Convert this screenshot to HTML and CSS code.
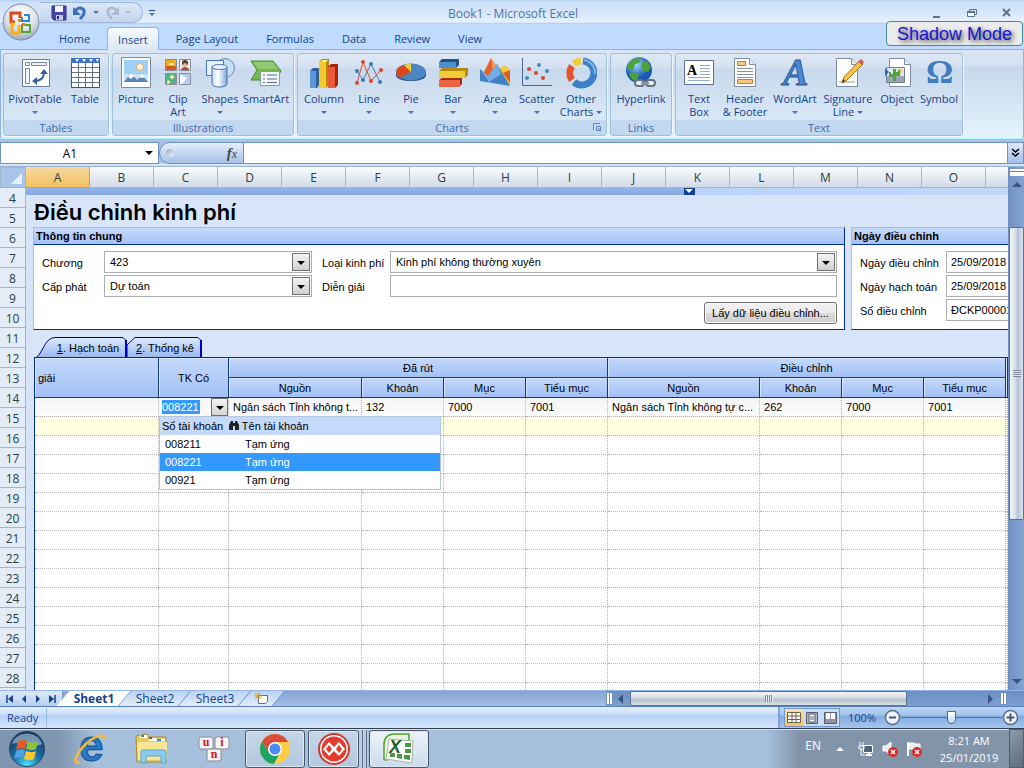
FILE: index.html
```html
<!DOCTYPE html>
<html lang="vi">
<head>
  <meta charset="UTF-8">
  <meta name="viewport" content="width=device-width, initial-scale=1.0">
  <title>Book1 - Microsoft Excel</title>
  <link rel="stylesheet" href="styles.css">
</head>
<body>

  <header class="titlebar">
    <div class="qat">
      <button aria-label="Save"><svg width="16" height="16" viewBox="0 0 16 16"><path d="M1 1h14v14H3l-2-2z" fill="#4646a8" stroke="#2c2c84"/><path d="M4 1h8v6H4z" fill="#f4f6ff"/><path d="M5 10h7v5H5z" fill="#c8cce8"/><path d="M6 11h2v3H6z" fill="#26266e"/></svg></button>
      <button aria-label="Undo"><svg width="16" height="16" viewBox="0 0 16 16"><path d="M3 6c4-5 10-3 9 2-.5 3-2 4-4 6" fill="none" stroke="#3c6fc4" stroke-width="3"/><path d="M1 2v8h8z" fill="#3c6fc4"/></svg></button>
      <i class="tri"></i>
      <button aria-label="Redo"><svg width="16" height="16" viewBox="0 0 16 16"><path d="M13 6C9 1 3 3 4 8c.5 3 2 4 4 6" fill="none" stroke="#a9b9cf" stroke-width="2.6"/><path d="M15 2v8H7z" fill="#a9b9cf"/></svg></button>
      <i class="tri off"></i>
    </div>
    <button class="customize" aria-label="Customize"><i></i><i class="tri"></i></button>
    <h1>Book1 - Microsoft Excel</h1>
    <div class="window-buttons">
      <button aria-label="Minimize"><svg width="12" height="12"><path d="M2 10h7" stroke="#5c7391" stroke-width="2"/></svg></button>
      <button aria-label="Restore"><svg width="12" height="12"><path d="M3.500 4V2.500h7v5H9" fill="none" stroke="#5c7391"/><path d="M1.500 4.500h7v5h-7z" fill="#fff" stroke="#5c7391"/><path d="M1 5h8" stroke="#5c7391" stroke-width="2"/></svg></button>
      <button aria-label="Close"><svg width="12" height="12"><path d="M2 2l7 7M9 2l-7 7" stroke="#5c7391" stroke-width="2"/></svg></button>
    </div>
  </header>
  <button class="office-button" aria-label="Office Button">
    <svg width="38" height="38" viewBox="0 0 38 38">
      <defs><radialGradient id="orb" cx=".5" cy=".3" r=".7"><stop offset="0" stop-color="#fff"/><stop offset=".6" stop-color="#dde2ea"/><stop offset="1" stop-color="#9ba9be"/></radialGradient></defs>
      <circle cx="19" cy="19" r="18" fill="url(#orb)" stroke="#7c8aa3"/>
      <g fill="none" stroke-width="3"><path d="M13 19H9V10h9v5" stroke="#dc4a1c"/><path d="M20 14v4h7v-6h-5" stroke="#2f86d6" stroke-width="2"/><path d="M13 21H10v9h7v-8" stroke="#f4b21d"/><path d="M20 22h8v7h-8z" stroke="#58a33c" stroke-width="2"/></g>
      <path d="M16 16h3v3h-3zM20 20h3v3h-3z" fill="#e3852c"/>
    </svg>
  </button>
  <div class="shadow-mode">Shadow Mode</div>

  <nav class="ribbon-tabs">
    <button>Home</button>
    <button class="active">Insert</button>
    <button>Page Layout</button>
    <button>Formulas</button>
    <button>Data</button>
    <button>Review</button>
    <button>View</button>
  </nav>

  <section class="ribbon">
    <div class="group">
      <div class="commands">
        <button class="cmd pivot"><svg width="32" height="32" viewBox="0 0 32 32"><path d="M3.500 2.500h27v27h-27z" fill="#fff" stroke="#6a7f9e"/><path d="M6.500 5.500h4v3h-4zM12.500 5.500h15v3h-15zM6.500 11.500h4v15h-4z" fill="#eef3fa" stroke="#7488a8"/><path d="M15 24c7 0 10-3 10-9" fill="none" stroke="#31609f" stroke-width="2"/><path d="M13 24l5-4v8zM25 12l-4 5h8z" fill="#31609f"/></svg>PivotTable<br><i class="tri"></i></button>
        <button class="cmd"><svg width="32" height="32" viewBox="0 0 32 32"><path d="M2.500 1.500h28v29h-28z" fill="#fff" stroke="#4c5566"/><path d="M2 1h29v5H2z" fill="#3e72c8"/><path d="M6 2h4l-2 3zM13 2h4l-2 3zM20 2h4l-2 3zM27 2h3l-2 3z" fill="#fff"/><path d="M9.500 6v24M16.500 6v24M23.500 6v24M3 10.500h27M3 15.500h27M3 20.500h27M3 25.500h27" stroke="#68717f"/></svg>Table</button>
      </div>
      <div class="group-name">Tables</div>
    </div>

    <div class="group">
      <div class="commands">
        <button class="cmd"><svg width="32" height="32" viewBox="0 0 32 32"><path d="M1.500.5h29v30h-29z" fill="#fff" stroke="#7a8ba5"/><path d="M4 3h24v22H4z" fill="#9fd0f5"/><path d="M4 17h24v8H4z" fill="#c8e2f6"/><circle cx="20" cy="10" r="3.500" fill="#fff2da" stroke="#f2a266"/><path d="M4 25l7-9 6 7 5-5 6 7z" fill="#5c83be"/><path d="M8 20l3-4 4 4-2 0-2 2zM19 20l3-3 3 3-3 1z" fill="#fff"/></svg>Picture</button>
        <button class="cmd"><svg width="32" height="32" viewBox="0 0 32 32"><path d="M3.500 2.500h11v11h-11z" fill="#f6a91c" stroke="#8a8d96"/><path d="M4 9h10v4H4z" fill="#d95b17"/><path d="M7 6h5v2H7z" fill="#fff6a0"/><path d="M17.500 2.500h11v11h-11z" fill="#eee" stroke="#8a8d96"/><circle cx="23" cy="6" r="3" fill="#5a3925"/><circle cx="23" cy="8" r="2" fill="#e5b896"/><path d="M19 13c0-4 8-4 8 0z" fill="#b34d36"/><path d="M3.500 16.500h11v11h-11z" fill="#52af8b" stroke="#8a8d96"/><path d="M10 17l1 2 2 1-2 1-1 2-1-2-2-1 2-1zM6 22l1 2 2 1-2 1-1 2-1-2z" fill="#fff391"/><path d="M17.500 16.500h11v11h-11z" fill="#b3ccf2" stroke="#8a8d96"/><path d="M18 17l7 4-5 6h-2z" fill="#f5f9ff"/></svg>Clip<br>Art</button>
        <button class="cmd"><svg width="32" height="32" viewBox="0 0 32 32"><defs><linearGradient id="cyl"><stop offset="0" stop-color="#c3dbf4"/><stop offset=".4" stop-color="#fff"/><stop offset="1" stop-color="#7ea6d5"/></linearGradient></defs><circle cx="21" cy="11" r="9.500" fill="#c9def6" stroke="#6a8cba"/><path d="M2.500 3.500h17v15h-17z" fill="#e6f1fd" stroke="#4a74ae"/><path d="M8 10v17c0 4 15 4 15 0V10z" fill="url(#cyl)" stroke="#4a74ae"/><ellipse cx="15.500" cy="10" rx="7.500" ry="2.500" fill="#e8f3ff" stroke="#4a74ae"/></svg>Shapes<br><i class="tri"></i></button>
        <button class="cmd wide"><svg width="32" height="32" viewBox="0 0 32 32"><path d="M1 4h22l8 10-5 9H1l6-10z" fill="#74b74f" stroke="#458a31"/><path d="M3 5h20l5 7H8z" fill="#a0d080" opacity=".7"/><path d="M10.500 14.500h19v14h-19z" fill="#f3f7f4" stroke="#8a9aa8"/><path d="M13 18h2M17 18h10M13 22h2M17 22h10M13 25.500h2M17 25.500h10" stroke="#556f91"/></svg>SmartArt</button>
      </div>
      <div class="group-name">Illustrations</div>
    </div>

    <div class="group">
      <div class="commands">
        <button class="cmd column"><svg width="32" height="32" viewBox="0 0 32 32"><path d="M2 14l3-3h6v17l-2 3H2z" fill="#2c5f9f"/><path d="M2 14h6v17H2z" fill="#5b99d8"/><path d="M11 5l3-3h7v26l-3 3h-7z" fill="#b58a0b"/><path d="M11 5h7v26h-7z" fill="#f4c92c"/><path d="M12 5l3-2h5l-2 2z" fill="#fff08b"/><path d="M20 10l3-3h7v21l-3 3h-7z" fill="#a6260c"/><path d="M20 10h7v21h-7z" fill="#ec5b36"/></svg>Column<br><i class="tri"></i></button>
        <button class="cmd"><svg width="32" height="32" viewBox="0 0 32 32"><g fill="none"><path d="M4 14l6 9 8-16 9 18" stroke="#4a80b6"/><path d="M4 26L10 5l8 19 10-11" stroke="#dc4a25"/></g><g fill="#3f78b0"><circle cx="4" cy="14" r="2"/><circle cx="10" cy="23" r="2"/><circle cx="18" cy="7" r="2"/><circle cx="27" cy="25" r="2"/></g><g fill="#dc4a25"><circle cx="4" cy="26" r="2"/><circle cx="10" cy="5" r="2"/><circle cx="18" cy="24" r="2"/><circle cx="28" cy="13" r="2"/></g></svg>Line<br><i class="tri"></i></button>
        <button class="cmd"><svg width="32" height="32" viewBox="0 0 32 32"><path d="M1 15v3c0 8 30 8 30 0v-3z" fill="#245289"/><ellipse cx="16" cy="15" rx="15" ry="8.500" fill="#4b87c3"/><path d="M16 15L5 21c-6-4-5-10 4-13z" fill="#dc4720"/><path d="M16 15L9 8c2-1 4-1 7-1z" fill="#f5d337"/></svg>Pie<br><i class="tri"></i></button>
        <button class="cmd"><svg width="32" height="32" viewBox="0 0 32 32"><path d="M2 5l3-3h17v6l-3 3H2z" fill="#27507f"/><path d="M2 5h17v6H2z" fill="#4e8fce"/><path d="M2 14l3-3h26v7l-3 3H2z" fill="#b38b10"/><path d="M2 14h26v7H2z" fill="#f1cc38"/><path d="M2 23l3-2h20v6l-3 3H2z" fill="#a62c10"/><path d="M2 23h21v7H2z" fill="#eb6642"/></svg>Bar<br><i class="tri"></i></button>
        <button class="cmd"><svg width="32" height="32" viewBox="0 0 32 32"><path d="M17 14l9-6 5 5v15z" fill="#f2cb32"/><path d="M24 16l7-3v13z" fill="#dd5a24"/><path d="M4 17L12 1l8 12v13H14z" fill="#e46127"/><path d="M12 1l7 12-5 3z" fill="#f59a5a"/><path d="M1 12l8 7 9-12 13 22-30-5z" fill="#3f82c8"/><path d="M1 12l8 7 9-12 4 10-12 8z" fill="#75aee4"/></svg>Area<br><i class="tri"></i></button>
        <button class="cmd"><svg width="32" height="32" viewBox="0 0 32 32"><path d="M1.500 1v27.500H31" fill="none" stroke="#4a6892"/><g fill="#d9472b"><circle cx="8" cy="12" r="2"/><circle cx="15" cy="16" r="2"/><circle cx="22" cy="21" r="2"/></g><g fill="#4b86c2"><circle cx="18" cy="8" r="2"/><circle cx="26" cy="14" r="2"/><circle cx="6" cy="21" r="2"/></g></svg>Scatter<br><i class="tri"></i></button>
        <button class="cmd other"><svg width="32" height="32" viewBox="0 0 32 32"><g fill="none" stroke-width="7"><path d="M18 4a12 12 0 1 1-9 21" stroke="#3d80c6"/><path d="M7 23a12 12 0 0 1 0-14" stroke="#e3552f"/><path d="M9 7a12 12 0 0 1 7-3" stroke="#f3cc2f"/></g><path d="M19 3a13 13 0 0 1 11 14" fill="none" stroke="#83b6e6" stroke-width="2"/></svg>Other<br>Charts <i class="tri"></i></button>
      </div>
      <div class="group-name">Charts<button class="launcher" aria-label="Chart options"><svg width="9" height="9"><path d="M.5 7V.5H7M3.500 3.500h4v4h-4zM5 5l3 3" fill="none" stroke="#6485b3"/></svg></button></div>
    </div>

    <div class="group">
      <div class="commands">
        <button class="cmd wider"><svg width="32" height="32" viewBox="0 0 32 32"><defs><radialGradient id="sea" cx=".4" cy=".3"><stop offset="0" stop-color="#9fd7ff"/><stop offset="1" stop-color="#1b59b3"/></radialGradient></defs><circle cx="14" cy="13" r="13" fill="url(#sea)"/><path d="M3 7l5-5 8-1-2 5-4 1-2 6-5-1zM18 4l5 1 3 5-3 5-5-1-2-5zM7 15l7 2-2 7-4-1-4-5z" fill="#4fa33d"/><g fill="none" stroke-width="2"><rect x="10" y="23" width="9" height="6" rx="3" stroke="#667482" fill="#e9eef2"/><rect x="21" y="23" width="9" height="6" rx="3" stroke="#667482" fill="#e9eef2"/><path d="M16 26h8" stroke="#8b97a3"/></g></svg>Hyperlink</button>
      </div>
      <div class="group-name">Links</div>
    </div>

    <div class="group">
      <div class="commands">
        <button class="cmd"><svg width="32" height="32" viewBox="0 0 32 32"><path d="M1.500 3.500h29v24h-29z" fill="#fff" stroke="#60718b"/><path d="M17 8.500h10M17 11.500h10M17 14.500h10M17 17.500h10M5 20.500h22M5 23.500h22" stroke="#94add0"/><text x="4" y="18" font-family="Liberation Serif, serif" font-size="14" font-weight="bold">A</text></svg>Text<br>Box</button>
        <button class="cmd wide"><svg width="32" height="32" viewBox="0 0 32 32"><path d="M5.500 1.500h15l6 6v22h-21z" fill="#fff" stroke="#7d8aa0"/><path d="M20.500 1.500v6h6" fill="#e4ecf6" stroke="#7d8aa0"/><path d="M8.500 4.500h8v4h-8zM8.500 22.500h15v4h-15z" fill="#fbc77f" stroke="#d9771f"/><path d="M8 11.500h16M8 14.500h16M8 17.500h16M8 20.500h16" stroke="#8b93a0"/></svg>Header<br>&amp; Footer</button>
        <button class="cmd wide"><svg width="32" height="32" viewBox="0 0 32 32"><text x="4" y="28" font-family="Liberation Serif, serif" font-size="38" font-style="italic" font-weight="bold" fill="#4c87cf" stroke="#245a9c">A</text></svg>WordArt<br><i class="tri"></i></button>
        <button class="cmd wider"><svg width="32" height="32" viewBox="0 0 32 32"><path d="M4.500 1.500h15l6 6v22h-21z" fill="#fff" stroke="#7d8aa0"/><path d="M19.500 1.500v6h6" fill="#e4ecf6" stroke="#7d8aa0"/><path d="M7 25h16" stroke="#8b93a0"/><path d="M10 26l2-6L27 4l4 3-16 16z" fill="#f3c24b" stroke="#b27516"/><path d="M26 5l3-3 3 3-2 3z" fill="#d95a56"/><path d="M10 26l1-4 2 2z" fill="#333"/></svg>Signature<br>Line <i class="tri"></i></button>
        <button class="cmd"><svg width="32" height="32" viewBox="0 0 32 32"><path d="M8.500 1.500h15l6 6v22h-21z" fill="#fff" stroke="#7d8aa0"/><path d="M23.500 1.500v6h6" fill="#e4ecf6" stroke="#7d8aa0"/><path d="M5.500 10.500h18v15h-18z" fill="#dfeaf3" stroke="#6c7c92"/><path d="M6 19h17v6H6z" fill="#9aa9b5"/><circle cx="19" cy="14" r="2.500" fill="#f5d070"/><path d="M12 12h3v3h2v-2h2v6h-4v5h-3v-4H8v-5h2v2h2z" fill="#55a245"/><path d="M4 11l4 4-4 4z" fill="#2d68b8"/></svg>Object</button>
        <button class="cmd"><svg width="32" height="32" viewBox="0 0 32 32"><text x="3" y="26" font-family="Liberation Serif, serif" font-size="34" font-weight="bold" fill="#3f7cc4">Ω</text></svg>Symbol</button>
      </div>
      <div class="group-name">Text</div>
    </div>
  </section>

  <div class="formula-bar">
    <div class="name-box"><input type="text" value="A1" aria-label="Name Box"><i class="tri black"></i></div>
    <div class="fx"><i class="dot"></i><span><b>f</b>x</span></div>
    <input class="formula" type="text" aria-label="Formula">
    <button class="expand" aria-label="Expand"><svg width="9" height="10"><path d="M1 1l3.500 3L8 1M1 5l3.500 3L8 5" fill="none" stroke="#000" stroke-width="1.500"/></svg></button>
  </div>

  <main class="workbook">
    <div class="sheet">
      <div class="columns">
        <button class="corner" aria-label="Select all"><svg width="12" height="12"><path d="M11 0v11H0z" fill="#e6f0fb"/></svg></button>
        <span class="selected">A</span><span>B</span><span>C</span><span>D</span><span>E</span><span>F</span><span>G</span><span>H</span><span>I</span><span>J</span><span>K</span><span>L</span><span>M</span><span>N</span><span>O</span><span></span>
      </div>
      <div class="sheet-body">
        <div class="rows">
          <span>4</span><span>5</span><span>6</span><span>7</span><span>8</span><span>9</span><span>10</span><span>11</span><span>12</span><span>13</span><span>14</span><span>15</span><span>16</span><span>17</span><span>18</span><span>19</span><span>20</span><span>21</span><span>22</span><span>23</span><span>24</span><span>25</span><span>26</span><span>27</span><span>28</span><span></span>
        </div>

        <div class="content">
          <div class="band">
            <div class="band-left"><i class="tri white"></i></div>
          </div>
          <h2>Điều chỉnh kinh phí</h2>

          <div class="panels">
            <section class="panel main-panel">
              <h3>Thông tin chung</h3>
              <form class="fields">
                <label for="chuong">Chương</label>
                <div class="combo"><select id="chuong"><option>423</option></select><i class="drop"></i></div>
                <label for="loai">Loại kinh phí</label>
                <div class="combo"><select id="loai"><option>Kinh phí không thường xuyên</option></select><i class="drop"></i></div>
                <label for="capphat">Cấp phát</label>
                <div class="combo"><select id="capphat"><option>Dự toán</option></select><i class="drop"></i></div>
                <label for="diengiai">Diễn giải</label>
                <input type="text" id="diengiai">
                <button type="button" class="get-data">Lấy dữ liệu điều chỉnh...</button>
              </form>
            </section>

            <section class="panel date-panel">
              <h3>Ngày điều chỉnh</h3>
              <form class="fields dates">
                <label for="ngaydc">Ngày điều chỉnh</label>
                <input type="text" id="ngaydc" value="25/09/2018">
                <label for="ngayht">Ngày hạch toán</label>
                <input type="text" id="ngayht" value="25/09/2018">
                <label for="sodc">Số điều chỉnh</label>
                <input type="text" id="sodc" value="ĐCKP00001">
              </form>
            </section>
          </div>

          <div class="form-tabs">
            <button class="first"><svg width="93" height="20"><path d="M1 20C8 13 9 1 19 .5h68l3 3V20" fill="url(#tabfill)" stroke="#00007f"/><path d="M90 3v17" stroke="#0000c0" stroke-width="2"/></svg><span><u>1</u>. Hạch toán</span></button>
            <button class="second"><svg width="77" height="20"><defs><linearGradient id="tabfill" x2="0" y2="1"><stop offset="0" stop-color="#dce9fd"/><stop offset="1" stop-color="#9abaf0"/></linearGradient></defs><path d="M0 20V8L8 .5h63l3 3V20" fill="url(#tabfill)" stroke="#00007f"/><path d="M74 3v17" stroke="#0000c0" stroke-width="2"/></svg><span><u>2</u>. Thống kê</span></button>
          </div>

          <div class="grid">
            <table>
              <colgroup>
                <col class="c-desc"><col class="c-acc"><col class="c-src"><col class="c-num"><col class="c-num"><col class="c-num"><col class="c-src2"><col class="c-num"><col class="c-num"><col class="c-num"><col>
              </colgroup>
              <thead>
                <tr><th rowspan="2" class="left">giải</th><th rowspan="2">TK Có</th><th colspan="4">Đã rút</th><th colspan="4">Điều chỉnh</th><th rowspan="2"></th></tr>
                <tr><th>Nguồn</th><th>Khoản</th><th>Mục</th><th>Tiểu mục</th><th>Nguồn</th><th>Khoản</th><th>Mục</th><th>Tiểu mục</th></tr>
              </thead>
              <tbody id="lines">
                <tr class="current">
                  <td></td>
                  <td class="editing"><div class="cell-edit"><input type="text" value="008221" aria-label="TK Có"><button aria-label="Mở danh sách"><i class="tri black"></i></button></div></td>
                  <td>Ngân sách Tỉnh không t...</td><td>132</td><td>7000</td><td>7001</td>
                  <td>Ngân sách Tỉnh không tự c...</td><td>262</td><td>7000</td><td>7001</td><td></td>
                </tr>
                <tr class="new"><td></td><td></td><td></td><td></td><td></td><td></td><td></td><td></td><td></td><td></td><td></td></tr>
              </tbody>
            </table>

            <table class="popup">
              <thead>
                <tr><th>Số tài khoản</th><th><svg width="10" height="10"><path d="M0 10V5l2-4h2v9zM6 10V1h2l2 4v5zM4 3h2v3H4z" fill="#222"/></svg> Tên tài khoản</th></tr>
              </thead>
              <tbody>
                <tr><td>008211</td><td>Tạm ứng</td></tr>
                <tr class="picked"><td>008221</td><td>Tạm ứng</td></tr>
                <tr><td>00921</td><td>Tạm ứng</td></tr>
              </tbody>
            </table>
          </div>
        </div>
      </div>
    </div>

    <div class="vscroll">
      <i class="split"></i>
      <i class="arrow up"></i>
      <div class="thumb"><i class="grip"></i></div>
      <i class="arrow down"></i>
    </div>
  </main>

  <div class="sheet-bar">
    <div class="sheet-nav">
      <button aria-label="First"><svg width="8" height="8"><path d="M1 0v8" stroke="#15428b" stroke-width="1.500"/><path d="M7 0v8L2 4z" fill="#15428b"/></svg></button>
      <button aria-label="Previous"><svg width="8" height="8"><path d="M6 0v8L2 4z" fill="#15428b"/></svg></button>
      <button aria-label="Next"><svg width="8" height="8"><path d="M2 0v8l4-4z" fill="#15428b"/></svg></button>
      <button aria-label="Last"><svg width="8" height="8"><path d="M7 0v8" stroke="#15428b" stroke-width="1.500"/><path d="M1 0v8l5-4z" fill="#15428b"/></svg></button>
    </div>
    <div class="sheet-tabs">
      <button class="active">Sheet1</button>
      <button>Sheet2</button>
      <button>Sheet3</button>
      <button class="new-sheet" aria-label="Insert Worksheet"><svg width="16" height="13"><path d="M4.500 3.500h9v6l-2 2h-7z" fill="#fff" stroke="#5b7197"/><path d="M4 0v8M0 4h8M1 1l6 6M7 1L1 7" stroke="#e0962b"/></svg></button>
    </div>
    <div class="hscroll">
      <i class="split"></i>
      <i class="arrow left"></i>
      <div class="thumb"><i class="grip"></i></div>
      <i class="arrow right"></i>
      <i class="split"></i>
    </div>
  </div>

  <footer class="status">
    <span class="ready">Ready</span>
    <div class="view-controls">
      <div class="views">
        <button class="on" aria-label="Normal"><svg width="14" height="12"><path d="M.5.5h13v10H.5zM.5 4h13M.5 7.500h13M5 .5v10M9 .5v10" fill="#fff" stroke="#6b6250"/></svg></button>
        <button aria-label="Page Layout"><svg width="12" height="12"><path d="M.5.5h11v11H.5z" fill="#aeb5be" stroke="#555e6b"/><path d="M3 2h6v8H3z" fill="#fff" stroke="#555e6b"/><path d="M4 5h4M4 7h4" stroke="#555e6b"/></svg></button>
        <button aria-label="Page Break Preview"><svg width="13" height="12"><path d="M.5.5h12v11H.5z" fill="#8e959e" stroke="#555e6b"/><path d="M2 1h4v6H2zM7 1h4v6H7z" fill="#fff"/></svg></button>
      </div>
      <span class="percent">100%</span>
      <button class="round" aria-label="Zoom out"><svg width="17" height="17"><circle cx="8.500" cy="8.500" r="7" fill="#edf3fb" stroke="#5c6f8b" stroke-width="1.500"/><path d="M5 8.500h7" stroke="#4a5668" stroke-width="2"/></svg></button>
      <input type="range" min="0" max="100" value="50" aria-label="Zoom">
      <button class="round" aria-label="Zoom in"><svg width="17" height="17"><circle cx="8.500" cy="8.500" r="7" fill="#edf3fb" stroke="#5c6f8b" stroke-width="1.500"/><path d="M4.500 8.500h8M8.500 4.500v8" stroke="#4a5668" stroke-width="2"/></svg></button>
    </div>
  </footer>

  <div class="taskbar">
    <button class="task start" aria-label="Start"><svg width="38" height="38" viewBox="0 0 38 38"><defs><radialGradient id="st" cx=".5" cy=".95" r=".9"><stop offset="0" stop-color="#4fe0fa"/><stop offset=".45" stop-color="#1b6fa8"/><stop offset="1" stop-color="#15395f"/></radialGradient></defs><circle cx="19" cy="19" r="17.500" fill="url(#st)" stroke="#254562"/><path d="M4 14C8 0 30 0 34 14 24 19 14 10 4 14z" fill="#cfe4f2" opacity=".5"/><path d="M10 12c4-3 6-2 9-1l-2 8c-3-1-6-1-9 1z" fill="#ea5a24"/><path d="M20 11c4 2 6 2 10 0l-2 8c-4 2-6 1-10 0z" fill="#8cc43e"/><path d="M8 21c3-2 6-2 9-1l-2 8c-3-1-6-1-9 1z" fill="#4fa3e3"/><path d="M18 21c4 1 6 2 10 0l-2 8c-4 2-6 1-10 0z" fill="#fcc72b"/></svg></button>
    <button class="task" aria-label="Internet Explorer"><svg width="34" height="34" viewBox="0 0 34 34"><text x="6" y="29" font-family="Liberation Sans, sans-serif" font-size="44" font-weight="bold" fill="#2779c4" stroke="#154f92">e</text><path d="M7 30c-9 4-4-9 7-19C22 4 33 0 31 8" fill="none" stroke="#f3b93a" stroke-width="2.500"/></svg></button>
    <button class="task" aria-label="Explorer"><svg width="34" height="34" viewBox="0 0 34 34"><path d="M1 4l11-2 2 3h17v25H2z" fill="#e6c968" stroke="#a98932"/><path d="M5 3h7v3H5zM14 6h7v3h-7z" fill="#fff"/><path d="M6 3h3v2H6z" fill="#2fa23c"/><path d="M14 5h3v2h-3z" fill="#cf3a24"/><path d="M21 7h9v2h-9z" fill="#fff"/><path d="M22 7h4v2h-4z" fill="#2f8fe0"/><path d="M2 10h30v18H3z" fill="#f7e596"/><path d="M6 31V20c0-2 1-2 3-2h19c2 0 3 0 3 2v11h-5v-7H11v7z" fill="#8accec" stroke="#5aa2cf"/></svg></button>
    <button class="task" aria-label="UniKey"><svg width="34" height="34" viewBox="0 0 34 34"><g fill="#f6f6f6" stroke="#8b8b8b"><rect x="2" y="5" width="14" height="12" rx="2"/><rect x="18" y="5" width="14" height="12" rx="2"/><rect x="10" y="17" width="14" height="12" rx="2"/></g><g font-family="Liberation Serif, serif" font-size="12" font-weight="bold" fill="#d3141b" text-anchor="middle"><text x="9" y="14">u</text><text x="25" y="14">i</text><text x="17" y="26">n</text></g></svg></button>
    <button class="task open" aria-label="Chrome"><svg width="32" height="32" viewBox="0 0 32 32"><circle cx="16" cy="16" r="15" fill="#fc4"/><path d="M3 8.500A15 15 0 0 1 29 8.500L30 10H16L10 20z" fill="#dd4b39"/><path d="M3 8.500A15 15 0 0 0 15 31l6-11-11 0z" fill="#1da362"/><path d="M16 9h14c3 11-5 22-15 22l7-12z" fill="#ffcd46"/><circle cx="16" cy="16" r="7" fill="#fff"/><circle cx="16" cy="16" r="5.500" fill="#4a8af4"/></svg></button>
    <button class="task open misa" aria-label="MISA"><svg width="34" height="34" viewBox="0 0 34 34"><circle cx="17" cy="17" r="15" fill="#fff" stroke="#d2352b" stroke-width="2"/><circle cx="17" cy="17" r="12.500" fill="#e23b30"/><path d="M12 10l-6 7 6 7 5-5 5 5 6-7-6-7-5 5z" fill="#fff"/><path d="M12 13l3 4-3 4-3-4zM22 13l3 4-3 4-3-4z" fill="#e23b30"/></svg></button>
    <div class="stack"></div>
    <button class="task open excel" aria-label="Excel"><svg width="34" height="34" viewBox="0 0 34 34"><path d="M2 28V12C2 6 6 2 12 2h15v10" fill="#e8f2e4" stroke="#48a823" stroke-width="1.500"/><path d="M2 28h4" stroke="#48a823"/><path d="M7 7l24 2-1 22L4 27z" fill="#fbfdf9" stroke="#aab4a2"/><g fill="#4c9448"><path d="M23 11h6v4h-6zM23 17h6v4h-6zM22 23h6v5l-6-1zM15 22h5v5l-5-1zM8 21h5v4H8z"/></g><text x="7" y="21" font-family="Liberation Sans, sans-serif" font-size="18" font-weight="bold" font-style="italic" fill="#1d6027">X</text></svg></button>
    <div class="tray">
      <span class="lang">EN</span>
      <i class="tri up"></i>
      <svg width="16" height="16" viewBox="0 0 16 16"><path d="M5.500 4.500h9v7h-9z" fill="#516579" stroke="#fff"/><path d="M8 14h6M11 12v2" stroke="#fff" stroke-width="2"/><path d="M2 1v4M5 1v4M1 5h5v3H1zM3 8v6h4" fill="none" stroke="#fff"/></svg>
      <svg width="16" height="16" viewBox="0 0 16 16"><path d="M1 5h3l5-4v13l-5-4H1z" fill="#e9eef3" stroke="#fff"/><circle cx="11" cy="11" r="5" fill="#dc2c24"/><path d="M9 9l4 4M13 9l-4 4" stroke="#fff" stroke-width="1.500"/></svg>
      <svg width="16" height="16" viewBox="0 0 16 16"><path d="M2 1v14" stroke="#fff" stroke-width="2"/><path d="M3 2h5l1 1h5v6H8L7 8H3z" fill="#e9eef3" stroke="#fff"/><circle cx="11" cy="11" r="5" fill="#dc2c24"/><path d="M9 9l4 4M13 9l-4 4" stroke="#fff" stroke-width="1.500"/></svg>
      <div class="clock">8:21 AM<br>25/01/2019</div>
    </div>
    <button class="show-desktop" aria-label="Show desktop"></button>
  </div>

  <script>
    // blank lines under the entry row
    const lines = document.getElementById('lines');
    for (let i = 0; i < 14; i++) {
      const row = document.createElement('tr');
      row.innerHTML = '<td></td>'.repeat(11);
      lines.appendChild(row);
    }
  </script>

</body>
</html>
```

FILE: styles.css
```css
* {
  box-sizing: border-box;
}
body {
  margin: 0;
  height: 100vh;
  display: flex;
  flex-direction: column;
  overflow: hidden;
  background-color: #bfdbff;
  font-family: "Open Sans", "Noto Sans", sans-serif;
  font-size: 11px;
  color: #15428b;
}
button {
  border: 0;
  padding: 0;
  background: none;
  font-family: inherit;
  font-size: inherit;
  color: inherit;
}
h1, h2, h3 {
  margin: 0;
  font-weight: normal;
}
svg {
  display: block;
}

/* small arrows */
.tri {
  display: inline-block;
  border: 3px solid transparent;
  border-top-color: #4a72ad;
  border-bottom: 0;
}
.tri.off {
  border-top-color: #a9b9cf;
}
.tri.black {
  border-width: 4px 4px 0 4px;
  border-top-color: #000;
}
.tri.white {
  border-width: 4px 4px 0 4px;
  border-top-color: #fff;
}
.tri.up {
  border: 4px solid transparent;
  border-bottom-color: #fff;
  border-top: 0;
}

/* title bar */
.titlebar {
  flex: none;
  height: 25px;
  display: flex;
  align-items: center;
  padding: 0 11px 0 40px;
  background: linear-gradient(#b7d2f2 0, #cce0f8 2px, #d6e6fa 12px, #e6f1fe 22px, #a5c9f3 24px, #eef6ff 25px);
}
.qat {
  display: flex;
  align-items: center;
  gap: 5px;
  height: 21px;
  width: 103px;
  padding-left: 11px;
  border: 1px solid #9cb8de;
  border-left: 0;
  border-radius: 0 11px 11px 0;
  background: linear-gradient(#dbe7f6, #c3d6ee);
}
.customize {
  width: 18px;
  display: flex;
  flex-direction: column;
  align-items: center;
  gap: 2px;
}
.customize i:first-child {
  width: 6px;
  height: 1px;
  background-color: #15428b;
}
.titlebar h1 {
  flex: 1;
  text-align: center;
  font-size: 12px;
  line-height: 25px;
  padding: 2px 66px 0 0;
  color: #5271a3;
}
.window-buttons {
  display: flex;
  gap: 23px;
}
.office-button {
  position: absolute;
  left: 2px;
  top: 3px;
}
.shadow-mode {
  position: absolute;
  right: 1px;
  top: 21px;
  width: 137px;
  height: 25px;
  border: 1px solid #4b8a94;
  border-radius: 4px;
  background-color: #ececec;
  text-align: center;
  font: 18px/24px "Liberation Sans", sans-serif;
  color: #1616d8;
  text-shadow: 2px 2px 4px #333;
}

/* ribbon */
.ribbon-tabs {
  flex: none;
  height: 25px;
  display: flex;
  padding: 2px 0 0 45px;
  border-bottom: 1px solid #8db2e3;
}
.ribbon-tabs button {
  padding: 0 14px;
}
.ribbon-tabs .active {
  height: 23px;
  margin: 0 3px;
  padding: 0 10px;
  border: 1px solid #8db2e3;
  border-bottom: 0;
  border-radius: 4px 4px 0 0;
  background: linear-gradient(#f5faff, #dce8f5);
}
.ribbon {
  flex: none;
  display: flex;
  gap: 3px;
  padding: 3px 2px 2px;
  height: 89px;
  border: 1px solid #8db2e3;
  border-top: 0;
  border-bottom-color: #b6f0f9;
  border-radius: 0 0 4px 4px;
  background: linear-gradient(#dbe6f4 0, #d3e1f2 16px, #c7d8ed 17px, #e3f4fd 100%);
}
.group {
  display: flex;
  flex-direction: column;
  border: 1px solid #9fbfdb;
  border-radius: 3px;
  background: linear-gradient(#dee8f5 0, #d3e0f0 14px, #c8d9ed 15px, #d8e7f5 66px);
  box-shadow: 1px 1px 0 #eff6fd;
}
.commands {
  flex: 1;
  display: flex;
  padding: 3px 2px 0;
}
.cmd {
  width: 42px;
  display: block;
  line-height: 13px;
  text-align: center;
  white-space: nowrap;
  align-self: flex-start;
}
.cmd svg {
  margin: 0 auto 3px;
}
.cmd .tri {
  vertical-align: 2px;
}
.cmd.wide {
  width: 50px;
}
.cmd.wider {
  width: 56px;
}
.cmd.pivot {
  width: 58px;
}
.cmd.column {
  width: 48px;
}
.cmd.other {
  width: 46px;
}
.group-name {
  position: relative;
  height: 15px;
  line-height: 15px;
  text-align: center;
  background-color: #c1d8f0;
  color: #3e6aaa;
}
.launcher {
  position: absolute;
  right: 4px;
  top: 3px;
}

/* formula bar */
.formula-bar {
  flex: none;
  display: flex;
  height: 28px;
  padding: 3px 0 3px;
  background: linear-gradient(#a9c3e8 0, #a9c3e8 24px, #e3edf9 25px, #c8daf0 27px, #6c93c5 28px);
}
.name-box {
  width: 159px;
  display: flex;
  align-items: center;
  background-color: #fff;
  border: 1px solid #6d93bd;
  padding-right: 5px;
}
.name-box input {
  flex: 1;
  min-width: 0;
  border: 0;
  padding: 0 6px 0 0;
  text-align: center;
  font-family: inherit;
  font-size: 12px;
}
.fx {
  width: 85px;
  display: flex;
  align-items: center;
  justify-content: space-between;
  padding: 0 6px;
  border: 1px solid #6d93bd;
  border-radius: 11px 0 0 11px;
  background: linear-gradient(#e4eefb, #a6c1e8);
  font: italic 12px "Liberation Serif", serif;
  color: #444;
}
.fx b {
  font-size: 15px;
}
.dot {
  width: 8px;
  height: 8px;
  border-radius: 50%;
  background: linear-gradient(135deg, #9aa8bd, #f2f5fa);
}
.formula {
  flex: 1;
  min-width: 0;
  border: 1px solid #6d93bd;
  border-left: 0;
}
.expand {
  width: 16px;
  display: flex;
  align-items: center;
  justify-content: center;
  border: 1px solid #6d93bd;
  border-left: 0;
  background: linear-gradient(#dce9fa, #a3bfe8);
}

/* sheet */
.workbook {
  flex: 1;
  min-height: 0;
  display: flex;
}
.sheet {
  flex: 1;
  min-width: 0;
  display: flex;
  flex-direction: column;
  overflow: hidden;
}
.columns {
  flex: none;
  display: flex;
  height: 21px;
  overflow: hidden;
}
.columns span {
  flex: none;
  width: 64px;
  text-align: center;
  font-size: 12px;
  line-height: 22px;
  color: #27413e;
  border-right: 1px solid #9eb6ce;
  border-bottom: 1px solid #9eb6ce;
  background: linear-gradient(#f9fcfd, #d3dbe9);
}
.columns .selected {
  background: linear-gradient(#f9d99f, #f1c15f);
  border-color: #f29536;
}
.corner {
  flex: none;
  width: 26px;
  border: 1px solid #9eb6ce;
  background-color: #a9c4e9;
}
.corner svg {
  margin: 3px 2px 0 auto;
}
.sheet-body {
  flex: 1;
  min-height: 0;
  display: flex;
}
.rows {
  width: 26px;
  flex: none;
  overflow: hidden;
}
.rows span {
  display: block;
  height: 20px;
  line-height: 22px;
  text-align: center;
  font-size: 12px;
  color: #27413e;
  background-color: #e4ecf7;
  border-right: 1px solid #9eb6ce;
  border-bottom: 1px solid #9eb6ce;
}
.content {
  flex: 1;
  min-width: 0;
  display: flex;
  flex-direction: column;
  overflow: hidden;
  background-color: #d8e4f8;
  font-family: "Liberation Sans", Arial, sans-serif;
  color: #000;
}
.band {
  flex: none;
  height: 7px;
  background: linear-gradient(90deg, #a9c8f5, #c1d8fa);
}
.band-left {
  width: 669px;
  height: 7px;
  display: flex;
  justify-content: flex-end;
  padding: 1px 2px;
  background: linear-gradient(90deg, transparent 658px, #103f99 658px), linear-gradient(#93b4e8, #88a9e0);
}
.content h2 {
  flex: none;
  height: 32px;
  padding-left: 8px;
  font: 600 22px/34px Inter, sans-serif;
}

/* panels */
.panels {
  flex: none;
  display: flex;
  gap: 6px;
  padding-left: 7px;
}
.panel {
  height: 103px;
  border: 1px solid #a0bcf0;
  border-bottom-color: #002d96;
  background-color: #fff;
}
.main-panel {
  flex: 1;
  border-right-color: #002d96;
}
.date-panel {
  width: 157px;
  flex: none;
  overflow: hidden;
  border-right: 0;
}
.panel h3 {
  height: 17px;
  padding-left: 2px;
  font-size: 11px;
  font-weight: bold;
  line-height: 17px;
  white-space: nowrap;
  border-bottom: 1px solid #002d96;
  background: linear-gradient(#c4d9fb, #a5c2f6);
}
.fields {
  display: grid;
  grid-template-columns: 62px 208px 10px 68px 1fr;
  grid-auto-rows: 22px;
  row-gap: 2px;
  padding: 6px 7px 0 8px;
}
.fields label:nth-of-type(even) {
  grid-column: 4;
}
.fields label {
  line-height: 24px;
  white-space: nowrap;
}
.fields input, .combo {
  border: 1px solid #abadb3;
  background-color: #fff;
  min-width: 0;
}
.fields input {
  padding: 0 4px;
  font-family: inherit;
  font-size: 11px;
}
.combo {
  position: relative;
}
.combo select {
  appearance: none;
  width: 100%;
  height: 20px;
  border: 0;
  padding: 0 5px;
  background: none;
  font-family: inherit;
  font-size: 11px;
  color: #000;
}
.drop {
  position: absolute;
  right: 1px;
  top: 1px;
  width: 18px;
  height: 18px;
  border: 1px solid #707070;
  background: linear-gradient(#f4f4f4, #d0d0d0);
}
.drop::after {
  content: "";
  position: absolute;
  left: 4px;
  top: 7px;
  border: 4px solid transparent;
  border-top-color: #000;
  border-bottom: 0;
}
.get-data {
  grid-column: 5;
  justify-self: end;
  width: 133px;
  margin-top: 3px;
  height: 22px;
  border: 1px solid #707070;
  border-radius: 3px;
  box-shadow: inset 0 0 0 1px #fbfbfb;
  background: linear-gradient(#f2f2f2 0, #ebebeb 50%, #dadada 50%, #cfcfcf);
  font-size: 11px;
  color: #000;
}
.dates {
  grid-template-columns: 86px 92px;
}
.dates label:nth-of-type(even) {
  grid-column: 1;
}

/* tabs over the grid */
.form-tabs {
  flex: none;
  display: flex;
  margin-top: 7px;
  padding-left: 10px;
}
.form-tabs button {
  position: relative;
  height: 20px;
  color: #000;
}
.form-tabs span {
  position: relative;
  display: block;
  line-height: 22px;
}
.form-tabs svg {
  position: absolute;
  left: 0;
  top: 0;
}
.first {
  width: 91px;
  padding-left: 13px;
}
.second {
  width: 76px;
}

/* grid */
.grid {
  flex: 1;
  min-height: 0;
  position: relative;
  margin-left: 8px;
  border-left: 1px solid #002d96;
  border-top: 1px solid #002d96;
  background-color: #fff;
  overflow: hidden;
}
table {
  table-layout: fixed;
  border-collapse: separate;
  border-spacing: 0;
}
.grid table {
  width: 100%;
}
.c-desc { width: 124px; }
.c-acc { width: 70px; }
.c-src { width: 133px; }
.c-src2 { width: 152px; }
.c-num { width: 82px; }
.grid th {
  height: 20px;
  padding: 0;
  font-weight: normal;
  border-right: 1px solid #103a8c;
  border-bottom: 1px solid #103a8c;
  background: linear-gradient(#c4d9fb, #a3c1f6);
  box-shadow: inset 1px 1px 0 #d9e7fd;
}
.grid th.left {
  text-align: left;
  padding-left: 3px;
}
.grid td {
  height: 19px;
  padding: 0 0 0 4px;
  overflow: hidden;
  white-space: nowrap;
  border-right: 1px dotted #b4b4b4;
  border-bottom: 1px dotted #b4b4b4;
}
.grid .current td {
  background: linear-gradient(#f5f5f5, #fcfcfc);
}
.grid .new td {
  background-color: #ffffe1;
}
.grid td.editing {
  padding: 0 0 0 3px;
}
.cell-edit {
  display: flex;
  align-items: center;
  justify-content: space-between;
}
.cell-edit input {
  width: 38px;
  padding: 0;
  border: 0;
  font-family: inherit;
  font-size: 11px;
  line-height: 14px;
  color: #fff;
  background-color: #3399ff;
}
.cell-edit button {
  width: 17px;
  height: 18px;
  border: 1px solid #707070;
  background: linear-gradient(#f4f4f4, #d4d4d4);
  line-height: 10px;
}
.cell-edit .tri {
  vertical-align: middle;
}

/* account list opened from the cell */
.grid .popup {
  position: absolute;
  left: 124px;
  top: 58px;
  width: 282px;
  border: 1px solid #b5c7de;
  background-color: #fff;
}
.popup th {
  height: 18px;
  border: 0;
  padding-left: 2px;
  text-align: left;
  background: #c4d9fb;
  box-shadow: none;
}
.popup th:first-child {
  width: 67px;
}
.popup th svg {
  display: inline-block;
}
.popup td {
  height: 18px;
  border: 0;
  padding: 0 5px;
}
.popup td + td {
  padding-left: 18px;
}
.popup .picked {
  color: #fff;
  background-color: #3399ff;
}

/* scroll bars */
.vscroll {
  flex: none;
  width: 16px;
  display: flex;
  flex-direction: column;
  align-items: center;
  border-left: 1px solid #6d8ec0;
  background: linear-gradient(90deg, #7192c3, #83a4d2);
}
.arrow {
  border: 5px solid transparent;
}
.arrow.up {
  margin-top: 6px;
  border-bottom-color: #3d5382;
  border-top: 0;
}
.arrow.down {
  margin: auto 0 6px;
  border-top-color: #3d5382;
  border-bottom: 0;
}
.arrow.left {
  border-right-color: #3d5382;
  border-left: 0;
}
.arrow.right {
  margin: 0 7px 0 auto;
  border-left-color: #3d5382;
  border-right: 0;
}
.vscroll .split {
  width: 14px;
  height: 7px;
  margin-top: 2px;
  background: linear-gradient(#fff 2px, #5f84b8 2px, #5f84b8 3px, #fff 3px);
}
.thumb {
  display: flex;
  align-items: center;
  justify-content: center;
  border: 1px solid #5c6f92;
  border-radius: 2px;
}
.vscroll .thumb {
  margin-top: 40px;
  width: 15px;
  height: 56%;
  background: linear-gradient(90deg, #f2f5f9, #d9e0e9 40%, #b3c5da 60%, #dbe5f0);
}
.vscroll .grip {
  width: 8px;
  height: 7px;
  background: repeating-linear-gradient(#7f8794 0 1px, #e6ebf2 1px 2px);
}
.hscroll {
  width: 418px;
  display: flex;
  align-items: center;
  padding-right: 17px;
  background: linear-gradient(#6c8fc1, #7f9fd0);
}
.hscroll .split {
  flex: none;
  width: 7px;
  height: 13px;
  border: 1px solid #6d93bd;
  background: linear-gradient(90deg, #fff 2px, #5f84b8 2px, #5f84b8 3px, #fff 3px);
}
.hscroll .arrow.left {
  margin: 0 7px 0 5px;
}
.hscroll .thumb {
  width: 277px;
  height: 15px;
  background: linear-gradient(#f2f5f9, #d9e0e9 40%, #b9c3cf 60%, #dbe2ea);
}
.hscroll .grip {
  width: 8px;
  height: 7px;
  background: repeating-linear-gradient(90deg, #7f8794 0 1px, #e6ebf2 1px 2px);
}

/* sheet tabs */
.sheet-bar {
  flex: none;
  height: 17px;
  display: flex;
  border-top: 1px solid #94b6e6;
  border-bottom: 1px solid #5880b8;
  background: linear-gradient(#84a4d4, #a6bfe4);
}
.sheet-nav {
  width: 63px;
  display: flex;
  align-items: center;
  justify-content: space-evenly;
  background: linear-gradient(#dce9fa, #b5cff2);
  border-right: 1px solid #6f93c8;
}
.sheet-tabs {
  flex: 1;
  display: flex;
}
.sheet-tabs button {
  position: relative;
  z-index: 0;
  width: 60px;
  font-size: 12px;
  line-height: 15px;
}
.sheet-tabs button::before {
  content: "";
  position: absolute;
  inset: 0;
  z-index: -1;
  background: linear-gradient(#b9d2f5, #e2edfb);
  border-right: 1px solid #6f93c8;
  transform: skewX(-40deg);
}
.sheet-tabs .active {
  width: 62px;
  font-weight: bold;
}
.sheet-tabs .active::before {
  background: #fff;
}
.sheet-tabs .new-sheet {
  width: 34px;
}
.new-sheet svg {
  margin: auto;
}

/* status bar */
.status {
  flex: none;
  height: 21px;
  display: flex;
  align-items: center;
  justify-content: space-between;
  background: linear-gradient(#e1edfb 0, #cfe1f9 7px, #b4d0f6 8px, #d5e6fb 100%);
}
.ready {
  width: 47px;
  padding-left: 7px;
  line-height: 19px;
  border-right: 1px solid #9dbde6;
}
.view-controls {
  display: flex;
  align-items: center;
  height: 21px;
  padding: 0 5px 0 4px;
  border-left: 2px solid #7ea4da;
  background: linear-gradient(#bcd5f6 0, #a3c3ee 8px, #84abe0 9px, #a5c6ef 100%);
}
.views {
  display: flex;
  border: 1px solid #7398cc;
  background-color: #c9dcf5;
}
.views button {
  width: 18px;
  height: 17px;
  display: flex;
  align-items: center;
  justify-content: center;
}
.views .on {
  background: linear-gradient(#fde0a4, #fbbf5a);
}
.percent {
  padding: 0 8px;
}
.status input {
  appearance: none;
  width: 101px;
  height: 17px;
  margin: 0;
  background: linear-gradient(transparent 8px, #52719f 8px, #52719f 9px, transparent 9px);
}
.status input::-webkit-slider-thumb {
  appearance: none;
  width: 9px;
  height: 13px;
  border: 1px solid #4e688f;
  border-radius: 1px 1px 5px 5px;
  background: linear-gradient(#fff, #c4d4e8);
}

/* taskbar */
.taskbar {
  flex: none;
  height: 40px;
  display: flex;
  align-items: center;
  border-top: 1px solid #33404f;
  box-shadow: inset 0 1px 0 #d5e2ef;
  background: linear-gradient(90deg, #8096b0 0, #8096b0 60px, #a6bfdc 95px, #a6bfdc 75%, #8294aa 78%, #8294aa 100%);
  color: #fff;
}
.task {
  width: 62px;
  height: 38px;
  display: flex;
  align-items: center;
  justify-content: center;
}
.task.start {
  width: 59px;
  padding-right: 6px;
}
.task.open {
  width: 60px;
  border: 1px solid #46566b;
  border-radius: 3px;
  box-shadow: inset 0 0 0 1px #dfe9f4;
  background: linear-gradient(#c6d6e8, #b2c7de);
}
.task.misa {
  width: 51px;
  margin-left: 3px;
}
.stack {
  width: 9px;
  height: 38px;
  margin-right: 1px;
  background: repeating-linear-gradient(90deg, #b8cce3 0 3px, #5c6f87 3px 4px);
}
.task.excel {
  background: linear-gradient(#edf3fa, #cbdaeb);
}
.tray {
  margin-left: auto;
  display: flex;
  align-items: center;
  gap: 8px;
}
.lang {
  margin-right: 7px;
  padding-bottom: 6px;
  font-size: 12px;
}
.tray .tri {
  margin-right: 6px;
}
.clock {
  width: 70px;
  margin-left: 4px;
  text-align: center;
  line-height: 17px;
}
.show-desktop {
  width: 15px;
  height: 39px;
  margin-left: 5px;
  border: 1px solid #4f5e70;
  background: linear-gradient(135deg, #8d9bab, #5e6b7b);
}
```
